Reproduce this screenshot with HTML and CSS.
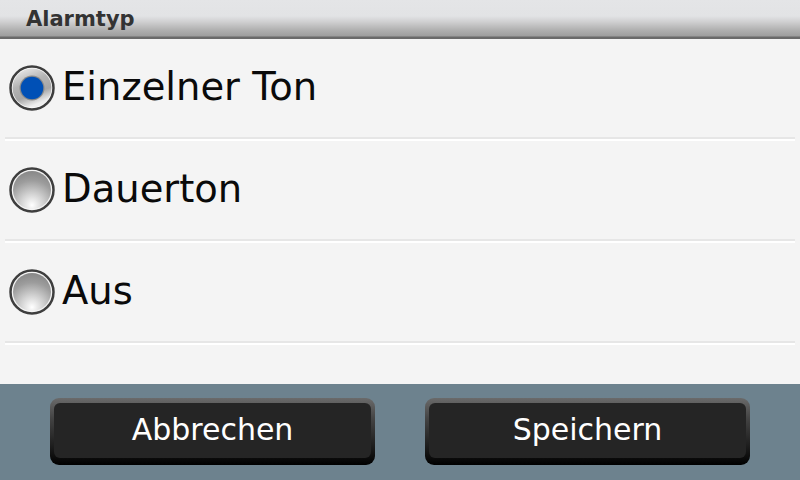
FILE: index.html
```html
<!DOCTYPE html>
<html>
<head>
<meta charset="utf-8">
<link rel="stylesheet" href="styles.css">
</head>
<body>
<svg class="defs" width="0" height="0" aria-hidden="true">
  <defs>
    <linearGradient id="silver" x1="0" y1="0" x2="0.4" y2="1">
      <stop offset="0" stop-color="#f4f4f4"/>
      <stop offset="0.45" stop-color="#b4b4b4"/>
      <stop offset="0.75" stop-color="#a6a6a6"/>
      <stop offset="1" stop-color="#eeeeee"/>
    </linearGradient>
    <radialGradient id="sphere" cx="0.5" cy="0.88" r="0.85" fx="0.5" fy="0.9">
      <stop offset="0" stop-color="#ffffff"/>
      <stop offset="0.35" stop-color="#d2d2d2"/>
      <stop offset="0.75" stop-color="#9c9c9c"/>
      <stop offset="1" stop-color="#8a8a8a"/>
    </radialGradient>
  </defs>
</svg>
<div class="screen">
  <header class="titlebar"><span class="title">Alarmtyp</span></header>
  <main class="list">
    <div class="row">
      <svg class="radio" viewBox="0 0 46 46" width="46" height="46">
        <circle cx="23" cy="23" r="21.5" fill="#fafafa" stroke="#3e3e3e" stroke-width="2.5"/>
        <circle cx="23" cy="23" r="19.5" fill="url(#silver)"/>
        <circle cx="23" cy="23" r="12.5" fill="#8a8a8a"/>
        <circle cx="23" cy="23" r="11.3" fill="#0050b6"/>
      </svg>
      <span class="label">Einzelner Ton</span>
    </div>
    <div class="row">
      <svg class="radio" viewBox="0 0 46 46" width="46" height="46">
        <circle cx="23" cy="23" r="21.5" fill="#f4f4f4" stroke="#3e3e3e" stroke-width="2.5"/>
        <circle cx="23" cy="23" r="19" fill="url(#sphere)"/>
      </svg>
      <span class="label">Dauerton</span>
    </div>
    <div class="row">
      <svg class="radio" viewBox="0 0 46 46" width="46" height="46">
        <circle cx="23" cy="23" r="21.5" fill="#f4f4f4" stroke="#3e3e3e" stroke-width="2.5"/>
        <circle cx="23" cy="23" r="19" fill="url(#sphere)"/>
      </svg>
      <span class="label">Aus</span>
    </div>
  </main>
  <footer class="actions">
    <button class="btn"><span class="face">Abbrechen</span></button>
    <button class="btn"><span class="face">Speichern</span></button>
  </footer>
</div>
</body>
</html>
```

FILE: styles.css
```css
* { box-sizing: border-box; }
html, body { margin: 0; padding: 0; }
body {
  width: 800px;
  height: 480px;
  overflow: hidden;
  font-family: "DejaVu Sans", "Liberation Sans", sans-serif;
  background: #f4f4f4;
}
.defs { position: absolute; width: 0; height: 0; }
.screen {
  display: flex;
  flex-direction: column;
  width: 800px;
  height: 480px;
}
.titlebar {
  height: 39px;
  flex: none;
  background: linear-gradient(to bottom, #e4e5e7 0px, #e2e3e5 16px, #cfcfd0 22px, #b0b0b0 30px, #9e9e9e 36px, #6a6a6a 37px, #6a6a6a 39px);
  display: flex;
  align-items: center;
  padding-left: 26px;
}
.title {
  font-weight: bold;
  font-size: 21px;
  color: #333333;
  line-height: 1;
  margin-top: -1px;
}
.list {
  flex: 1;
  background: #f4f4f4;
  display: flex;
  flex-direction: column;
}
.row {
  height: 102px;
  flex: none;
  display: flex;
  align-items: center;
  margin: 0 5px;
  padding-left: 4px;
  padding-bottom: 4px;
  border-bottom: 2px solid #ffffff;
  box-shadow: inset 0 -2px 0 #e6e6e6;
}
.radio {
  flex: none;
  display: block;
  margin-top: 2px;
}
.label {
  font-size: 38.5px;
  color: #0a0a0a;
  line-height: 1;
  margin-left: 7px;
}
.actions {
  height: 96px;
  flex: none;
  background: #6d828e;
  display: flex;
  justify-content: center;
  gap: 50px;
  padding-top: 14px;
}
.btn {
  width: 325px;
  height: 67px;
  padding: 5px 4px 7px;
  border: none;
  border-radius: 9px;
  background: linear-gradient(to bottom, #6a6a6a 0%, #444444 30%, #1a1a1a 75%, #000000 100%);
  font: inherit;
  cursor: pointer;
  display: flex;
}
.face {
  flex: 1;
  border-radius: 6px;
  background: #252525;
  color: #ffffff;
  font-size: 30px;
  display: flex;
  align-items: center;
  justify-content: center;
  padding-bottom: 2px;
}
```
